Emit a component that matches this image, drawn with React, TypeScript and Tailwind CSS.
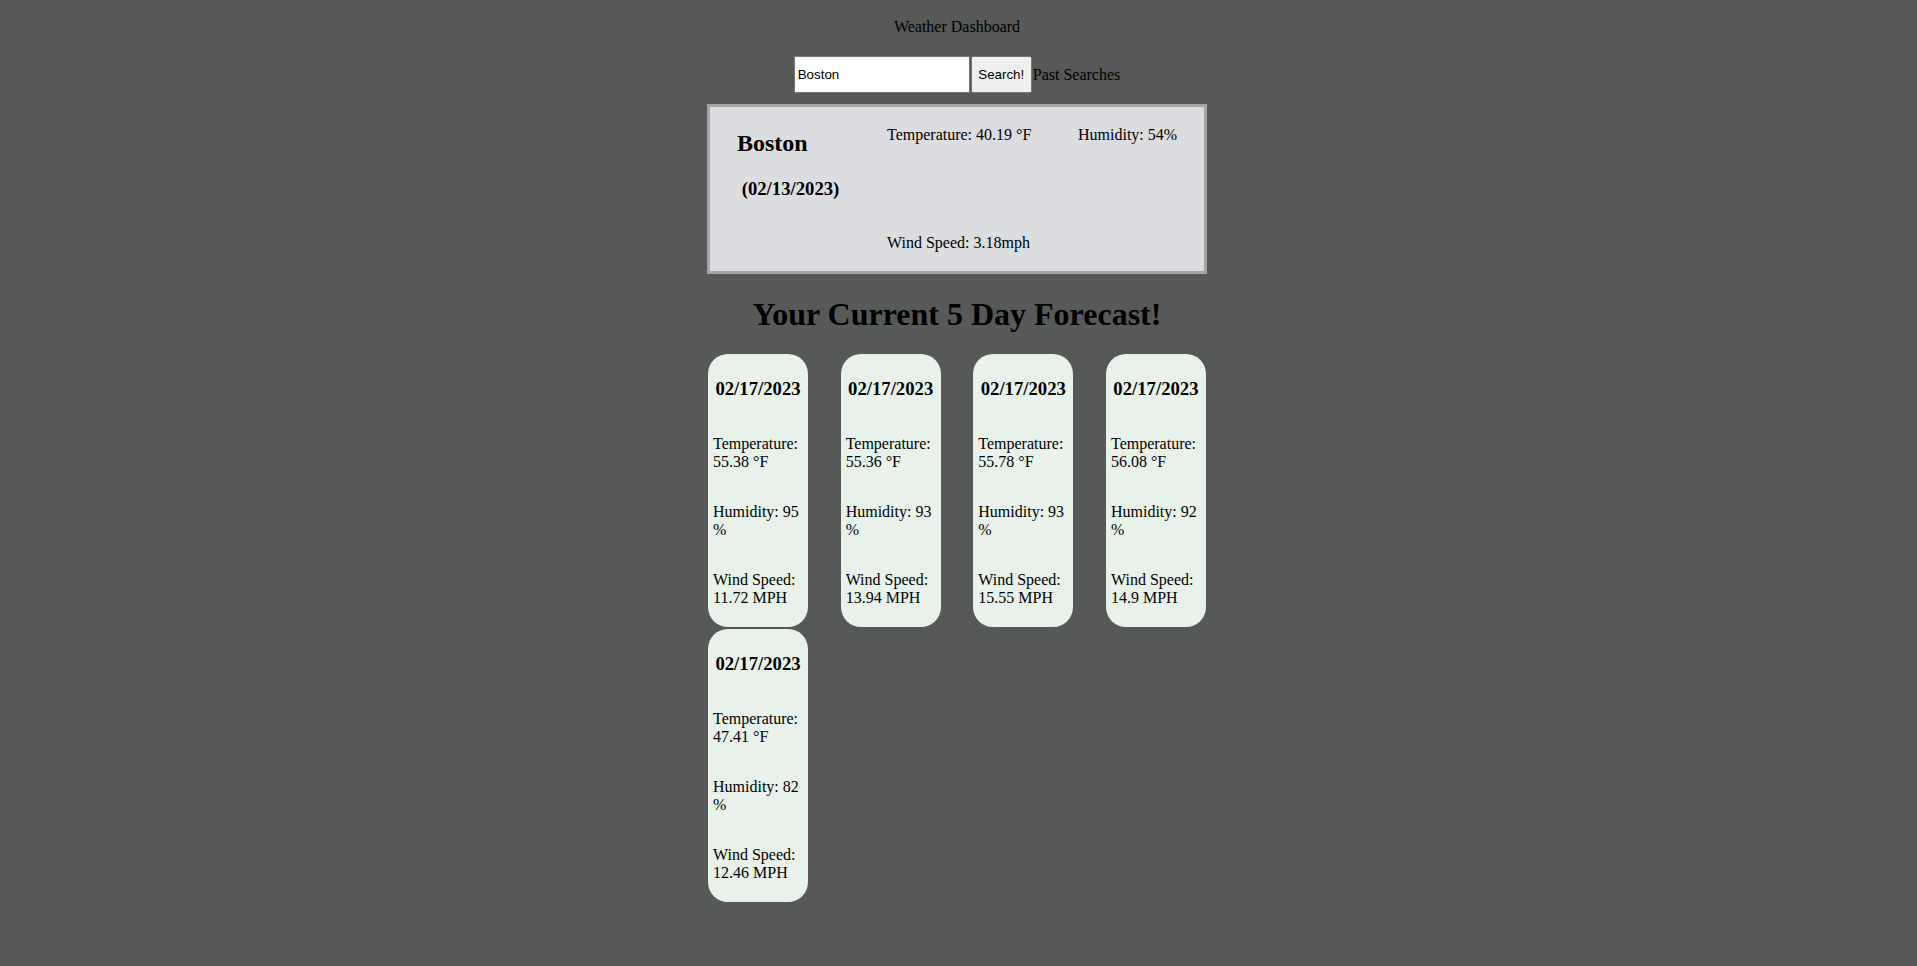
import React from "react";

type Day = {
  date: string;
  temp: string;
  humidity: number;
  wind: string;
};

const forecast: Day[] = [
  { date: "02/17/2023", temp: "55.38", humidity: 95, wind: "11.72" },
  { date: "02/17/2023", temp: "55.36", humidity: 93, wind: "13.94" },
  { date: "02/17/2023", temp: "55.78", humidity: 93, wind: "15.55" },
  { date: "02/17/2023", temp: "56.08", humidity: 92, wind: "14.9" },
  { date: "02/17/2023", temp: "47.41", humidity: 82, wind: "12.46" },
];

const serif = "font-['Liberation_Serif','Times_New_Roman',serif]";
const sans = "font-['Liberation_Sans',Arial,sans-serif]";

const ForecastCard: React.FC<{ day: Day }> = ({ day }) => (
  <div className="m-px flex h-[273px] w-[100px] flex-col rounded-[20px] bg-[#e8f2ea] p-[5px]">
    <h3 className="mt-[19px] mb-[20px] text-center text-[18.72px] leading-[21px] font-bold">
      {day.date}
    </h3>
    <p className="my-4 text-base leading-[18px]">Temperature: {day.temp} °F</p>
    <p className="my-4 text-base leading-[18px]">Humidity: {day.humidity} %</p>
    <p className="my-4 text-base leading-[18px]">Wind Speed: {day.wind} MPH</p>
  </div>
);

export default function App() {
  return (
    <div className={`min-h-screen bg-[#575958] pr-[3px] pb-16 text-black ${serif}`}>
      {/* header + search */}
      <header className="pt-[18px] text-center text-base leading-[18px]">
        Weather Dashboard
      </header>
      <div className="mt-[20px] flex items-center justify-center">
        <input
          type="text"
          defaultValue="Boston"
          className={`h-[37px] w-[176px] border border-[#767676] bg-white px-[3px] text-[13.33px] text-black outline-none ${sans}`}
        />
        <button
          className={`ml-px h-[37px] w-[61px] rounded-[2px] border border-[#767676] bg-[#efefef] text-[13.33px] text-black ${sans}`}
        >
          Search!
        </button>
        <span className="ml-px text-base leading-[18px]">Past Searches</span>
      </div>

      {/* current weather */}
      <div className="mx-auto mt-[11px] flex h-[170px] w-[500px] border-[3px] border-[#a4a5a7] bg-[#dcdde0] pl-[27px]">
        <div className="w-[150px]">
          <h2 className="mt-[22.5px] text-2xl leading-[27px] font-bold">Boston</h2>
          <h3 className="mt-[21px] text-[18.72px] leading-[21px] font-bold whitespace-pre">
            {" (02/13/2023)"}
          </h3>
        </div>
        <div className="pt-[18.6px]">
          <div className="flex text-base leading-[18px]">
            <p className="w-[191px]">Temperature: 40.19 °F</p>
            <p>Humidity: 54%</p>
          </div>
          <p className="mt-[90px] text-base leading-[18px]">Wind Speed: 3.18mph</p>
        </div>
      </div>

      {/* forecast */}
      <h1 className="mt-[22px] text-center text-[32px] leading-[36px] font-bold">
        Your Current 5 Day Forecast!
      </h1>
      <div className="mx-auto mt-[21px] flex w-[500px] flex-wrap justify-between">
        {forecast.map((day, i) => (
          <ForecastCard key={i} day={day} />
        ))}
      </div>
    </div>
  );
}
